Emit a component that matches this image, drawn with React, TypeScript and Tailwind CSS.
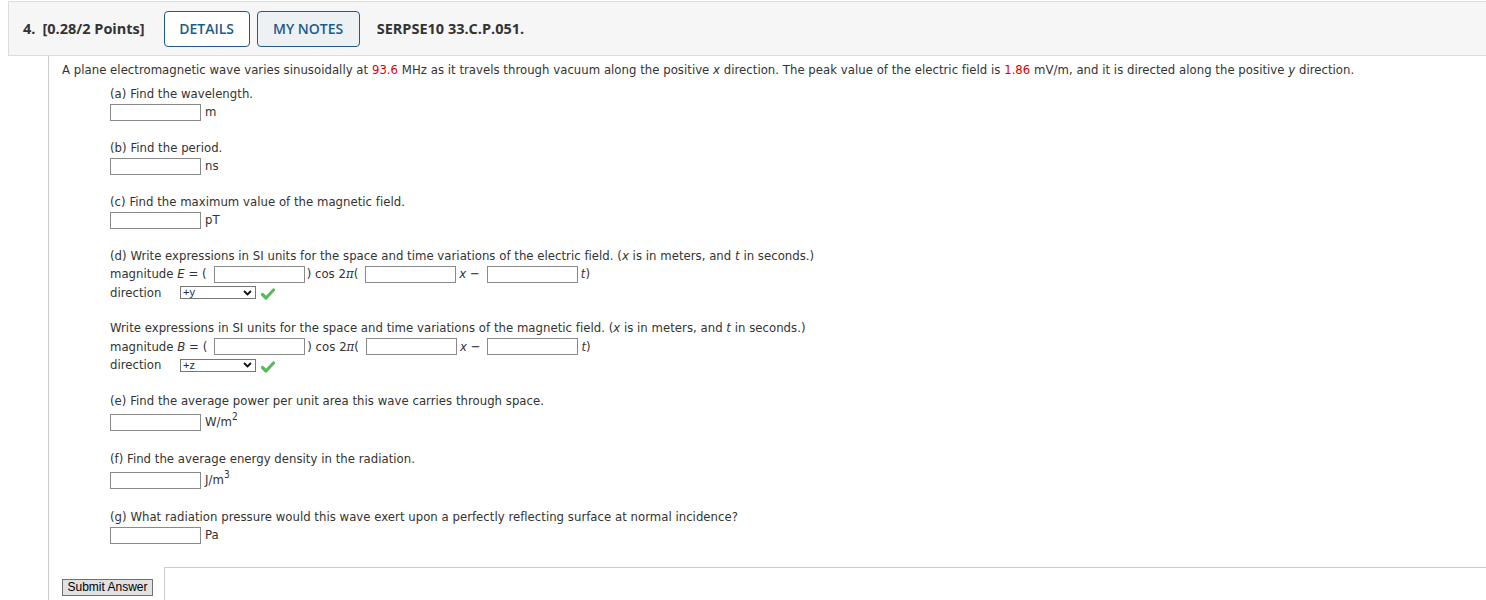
import React from "react";

const Inp = () => (
  <span className="inline-block w-[91px] h-[17px] border border-[#8a8a8a] bg-white align-middle" />
);

const Check = () => (
  <svg width="14" height="12" viewBox="0 0 14 12" className="inline-block ml-[5px] mt-[3px] align-middle">
    <path d="M1.5 6.5 L5 10 L12.5 2" fill="none" stroke="#5cb85c" strokeWidth="3.2" strokeLinecap="round" strokeLinejoin="round" />
  </svg>
);

const Sel = ({ v }: { v: string }) => (
  <span className="inline-flex items-center justify-between w-[76px] h-[13px] border border-[#767676] bg-white align-middle pl-[2px] pr-[3px] text-[11px] leading-none text-[#1a2a55] font-['Liberation_Sans',sans-serif]">
    <span>{v}</span>
    <svg width="9" height="6" viewBox="0 0 9 6">
      <path d="M1 1 L4.5 4.5 L8 1" fill="none" stroke="#111" strokeWidth="1.8" />
    </svg>
  </span>
);

const MathRow = ({ sym, h }: { sym: string; h: string }) => (
  <div className={"flex items-center " + h}>
    <span>
      magnitude <i>{sym}</i> = (
    </span>
    <span className="ml-[7px] flex"><Inp /></span>
    <span className="ml-[2px]">) cos 2<i className="font-['DejaVu_Serif',serif]">π</i>(</span>
    <span className="ml-[7px] flex"><Inp /></span>
    <span className="ml-[3px]">
      <i>x</i> −
    </span>
    <span className="ml-[7px] flex"><Inp /></span>
    <span className="ml-[3px]">
      <i>t</i>)
    </span>
  </div>
);

export default function App() {
  return (
    <div className="w-[1486px] h-[600px] overflow-hidden bg-white flex flex-col">
      <div className="mt-[1px] ml-[8px] h-[55px] shrink-0 bg-[#f6f6f6] border-y border-l border-[#dddddd] flex items-center pl-[14px] font-['Open_Sans',sans-serif] text-[14.5px] font-bold text-[#333]">
        <span>4.</span>
        <span className="ml-[7px]">[0.28/2 Points]</span>
        <span className="ml-[19px] h-[36px] w-[86px] border border-[#1d5b8a] rounded-[4px] text-[#1d5b8a] text-[14px] font-semibold bg-white flex items-center justify-center">
          DETAILS
        </span>
        <span className="ml-[7px] h-[36px] w-[103px] border border-[#1d5b8a] rounded-[4px] text-[#1d5b8a] text-[14px] font-semibold bg-[#eef1f4] flex items-center justify-center">
          MY NOTES
        </span>
        <span className="ml-[17px]">SERPSE10 33.C.P.051.</span>
      </div>

      <div className="flex-1 ml-[48px] border-l border-[#cccccc] flex flex-col text-[13px] leading-[18px] tracking-[0.03px] text-[#333] font-['DejaVu_Sans_Condensed','DejaVu_Sans',sans-serif] font-stretch-condensed">
        <div className="pl-[13px] pt-[5px]">
          <div>
            A plane electromagnetic wave varies sinusoidally at <span className="text-[#e00000]">93.6</span> MHz as it
            travels through vacuum along the positive <i>x</i> direction. The peak value of the electric field is{" "}
            <span className="text-[#e00000]">1.86</span> mV/m, and it is directed along the positive <i>y</i> direction.
          </div>

          <div className="pl-[48px] mt-[6px]">
            <div>(a) Find the wavelength.</div>
            <div className="h-[18px] flex items-center gap-[4px]">
              <Inp /> <span>m</span>
            </div>
            <div className="h-[18px]" />

            <div>(b) Find the period.</div>
            <div className="h-[18px] flex items-center gap-[4px]">
              <Inp /> <span>ns</span>
            </div>
            <div className="h-[18px]" />

            <div>(c) Find the maximum value of the magnetic field.</div>
            <div className="h-[18px] flex items-center gap-[4px]">
              <Inp /> <span>pT</span>
            </div>
            <div className="h-[18px]" />

            <div>
              (d) Write expressions in SI units for the space and time variations of the electric field. (<i>x</i> is in
              meters, and <i>t</i> in seconds.)
            </div>
            <MathRow sym="E" h="h-[18px]" />
            <div className="h-[19px] flex items-center">
              <span className="w-[70px]">direction</span>
              <Sel v="+y" />
              <Check />
            </div>
            <div className="h-[17px]" />

            <div>
              Write expressions in SI units for the space and time variations of the magnetic field. (<i>x</i> is in
              meters, and <i>t</i> in seconds.)
            </div>
            <MathRow sym="B" h="h-[19px]" />
            <div className="h-[18px] flex items-center">
              <span className="w-[70px]">direction</span>
              <Sel v="+z" />
              <Check />
            </div>
            <div className="h-[18px]" />

            <div>(e) Find the average power per unit area this wave carries through space.</div>
            <div className="h-[22px] flex items-end pb-[1px] gap-[4px]">
              <Inp />
              <span className="leading-[18px]">
                W/m<span className="text-[10px] relative top-[-6px] leading-none">2</span>
              </span>
            </div>
            <div className="h-[18px]" />

            <div>(f) Find the average energy density in the radiation.</div>
            <div className="h-[22px] flex items-end pb-[1px] gap-[4px]">
              <Inp />
              <span className="leading-[18px]">
                J/m<span className="text-[10px] relative top-[-6px] leading-none">3</span>
              </span>
            </div>
            <div className="h-[18px]" />

            <div>(g) What radiation pressure would this wave exert upon a perfectly reflecting surface at normal incidence?</div>
            <div className="h-[18px] flex items-center gap-[4px]">
              <Inp /> <span>Pa</span>
            </div>
          </div>
        </div>

        <div className="flex-1 flex mt-[23px]">
          <div className="pl-[13px] pt-[11px] w-[115px] shrink-0">
            <span className="inline-flex items-center justify-center w-[91px] h-[17px] border border-[#707070] bg-[#e1e1e1] text-[12px] leading-none tracking-normal text-black font-['Liberation_Sans',sans-serif] [font-stretch:normal]">
              Submit Answer
            </span>
          </div>
          <div className="flex-1 border-l border-t border-[#cccccc]" />
        </div>
      </div>
    </div>
  );
}
